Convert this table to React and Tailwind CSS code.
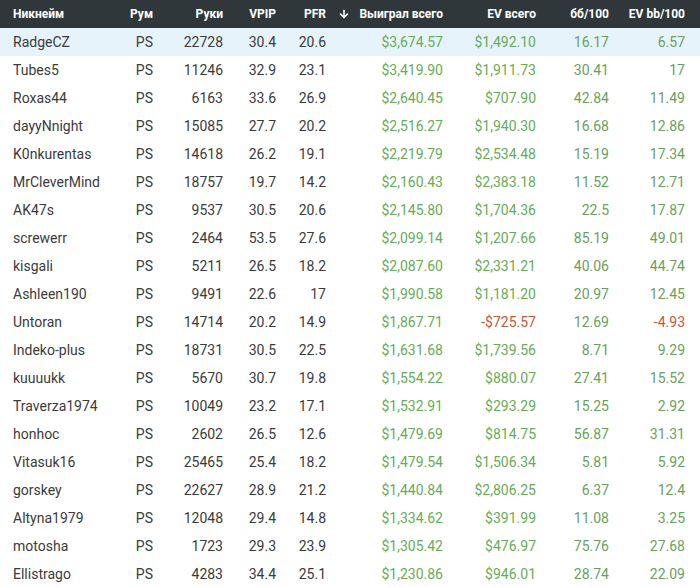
import { ArrowDown } from "lucide-react";

const rows = [
  ["RadgeCZ", "22728", "30.4", "20.6", "$3,674.57", "$1,492.10", "16.17", "6.57"],
  ["Tubes5", "11246", "32.9", "23.1", "$3,419.90", "$1,911.73", "30.41", "17"],
  ["Roxas44", "6163", "33.6", "26.9", "$2,640.45", "$707.90", "42.84", "11.49"],
  ["dayyNnight", "15085", "27.7", "20.2", "$2,516.27", "$1,940.30", "16.68", "12.86"],
  ["K0nkurentas", "14618", "26.2", "19.1", "$2,219.79", "$2,534.48", "15.19", "17.34"],
  ["MrCleverMind", "18757", "19.7", "14.2", "$2,160.43", "$2,383.18", "11.52", "12.71"],
  ["AK47s", "9537", "30.5", "20.6", "$2,145.80", "$1,704.36", "22.5", "17.87"],
  ["screwerr", "2464", "53.5", "27.6", "$2,099.14", "$1,207.66", "85.19", "49.01"],
  ["kisgali", "5211", "26.5", "18.2", "$2,087.60", "$2,331.21", "40.06", "44.74"],
  ["Ashleen190", "9491", "22.6", "17", "$1,990.58", "$1,181.20", "20.97", "12.45"],
  ["Untoran", "14714", "20.2", "14.9", "$1,867.71", "-$725.57", "12.69", "-4.93"],
  ["Indeko-plus", "18731", "30.5", "22.5", "$1,631.68", "$1,739.56", "8.71", "9.29"],
  ["kuuuukk", "5670", "30.7", "19.8", "$1,554.22", "$880.07", "27.41", "15.52"],
  ["Traverza1974", "10049", "23.2", "17.1", "$1,532.91", "$293.29", "15.25", "2.92"],
  ["honhoc", "2602", "26.5", "12.6", "$1,479.69", "$814.75", "56.87", "31.31"],
  ["Vitasuk16", "25465", "25.4", "18.2", "$1,479.54", "$1,506.34", "5.81", "5.92"],
  ["gorskey", "22627", "28.9", "21.2", "$1,440.84", "$2,806.25", "6.37", "12.4"],
  ["Altyna1979", "12048", "29.4", "14.8", "$1,334.62", "$391.99", "11.08", "3.25"],
  ["motosha", "1723", "29.3", "23.9", "$1,305.42", "$476.97", "75.76", "27.68"],
  ["Ellistrago", "4283", "34.4", "25.1", "$1,230.86", "$946.01", "28.74", "22.09"],
];

const cols =
  "grid grid-cols-[100px_53px_70px_53px_50px_117px_93px_73px_76px] pr-[15px] items-center";

// money columns: bright green, bb columns: muted green, negatives red
function money(v) {
  return v.startsWith("-") ? "text-[#c4583a]" : "text-[#68ab58]";
}
function bb(v) {
  return v.startsWith("-") ? "text-[#c4583a]" : "text-[#6a9f60]";
}

export default function App() {
  return (
    <div
      className="w-[700px] h-[587px] overflow-hidden bg-white"
      style={{ fontFamily: "Roboto, 'Liberation Sans', sans-serif" }}
    >
      {/* header */}
      <div className={`${cols} h-[28px] bg-[#30373a] text-white text-[12px] font-bold`}>
        <div className="pl-[13px]">Никнейм</div>
        <div className="text-right">Рум</div>
        <div className="text-right">Руки</div>
        <div className="text-right">VPIP</div>
        <div className="text-right">PFR</div>
        <div className="flex items-center justify-end gap-[9px]">
          <ArrowDown size={12} strokeWidth={3.2} />
          <span>Выиграл всего</span>
        </div>
        <div className="text-right">EV всего</div>
        <div className="text-right">бб/100</div>
        <div className="text-right">EV bb/100</div>
      </div>

      {/* rows */}
      {rows.map((r, i) => (
        <div
          key={r[0]}
          className={`${cols} h-[28px] text-[14px] text-[#3b3b3b] ${
            i === 0 ? "bg-[#e7f3fb]" : ""
          }`}
        >
          <div className="pl-[13px] whitespace-nowrap">{r[0]}</div>
          <div className="text-right">PS</div>
          <div className="text-right">{r[1]}</div>
          <div className="text-right">{r[2]}</div>
          <div className="text-right">{r[3]}</div>
          <div className={`text-right ${money(r[4])}`}>{r[4]}</div>
          <div className={`text-right ${money(r[5])}`}>{r[5]}</div>
          <div className={`text-right ${bb(r[6])}`}>{r[6]}</div>
          <div className={`text-right ${bb(r[7])}`}>{r[7]}</div>
        </div>
      ))}
    </div>
  );
}
